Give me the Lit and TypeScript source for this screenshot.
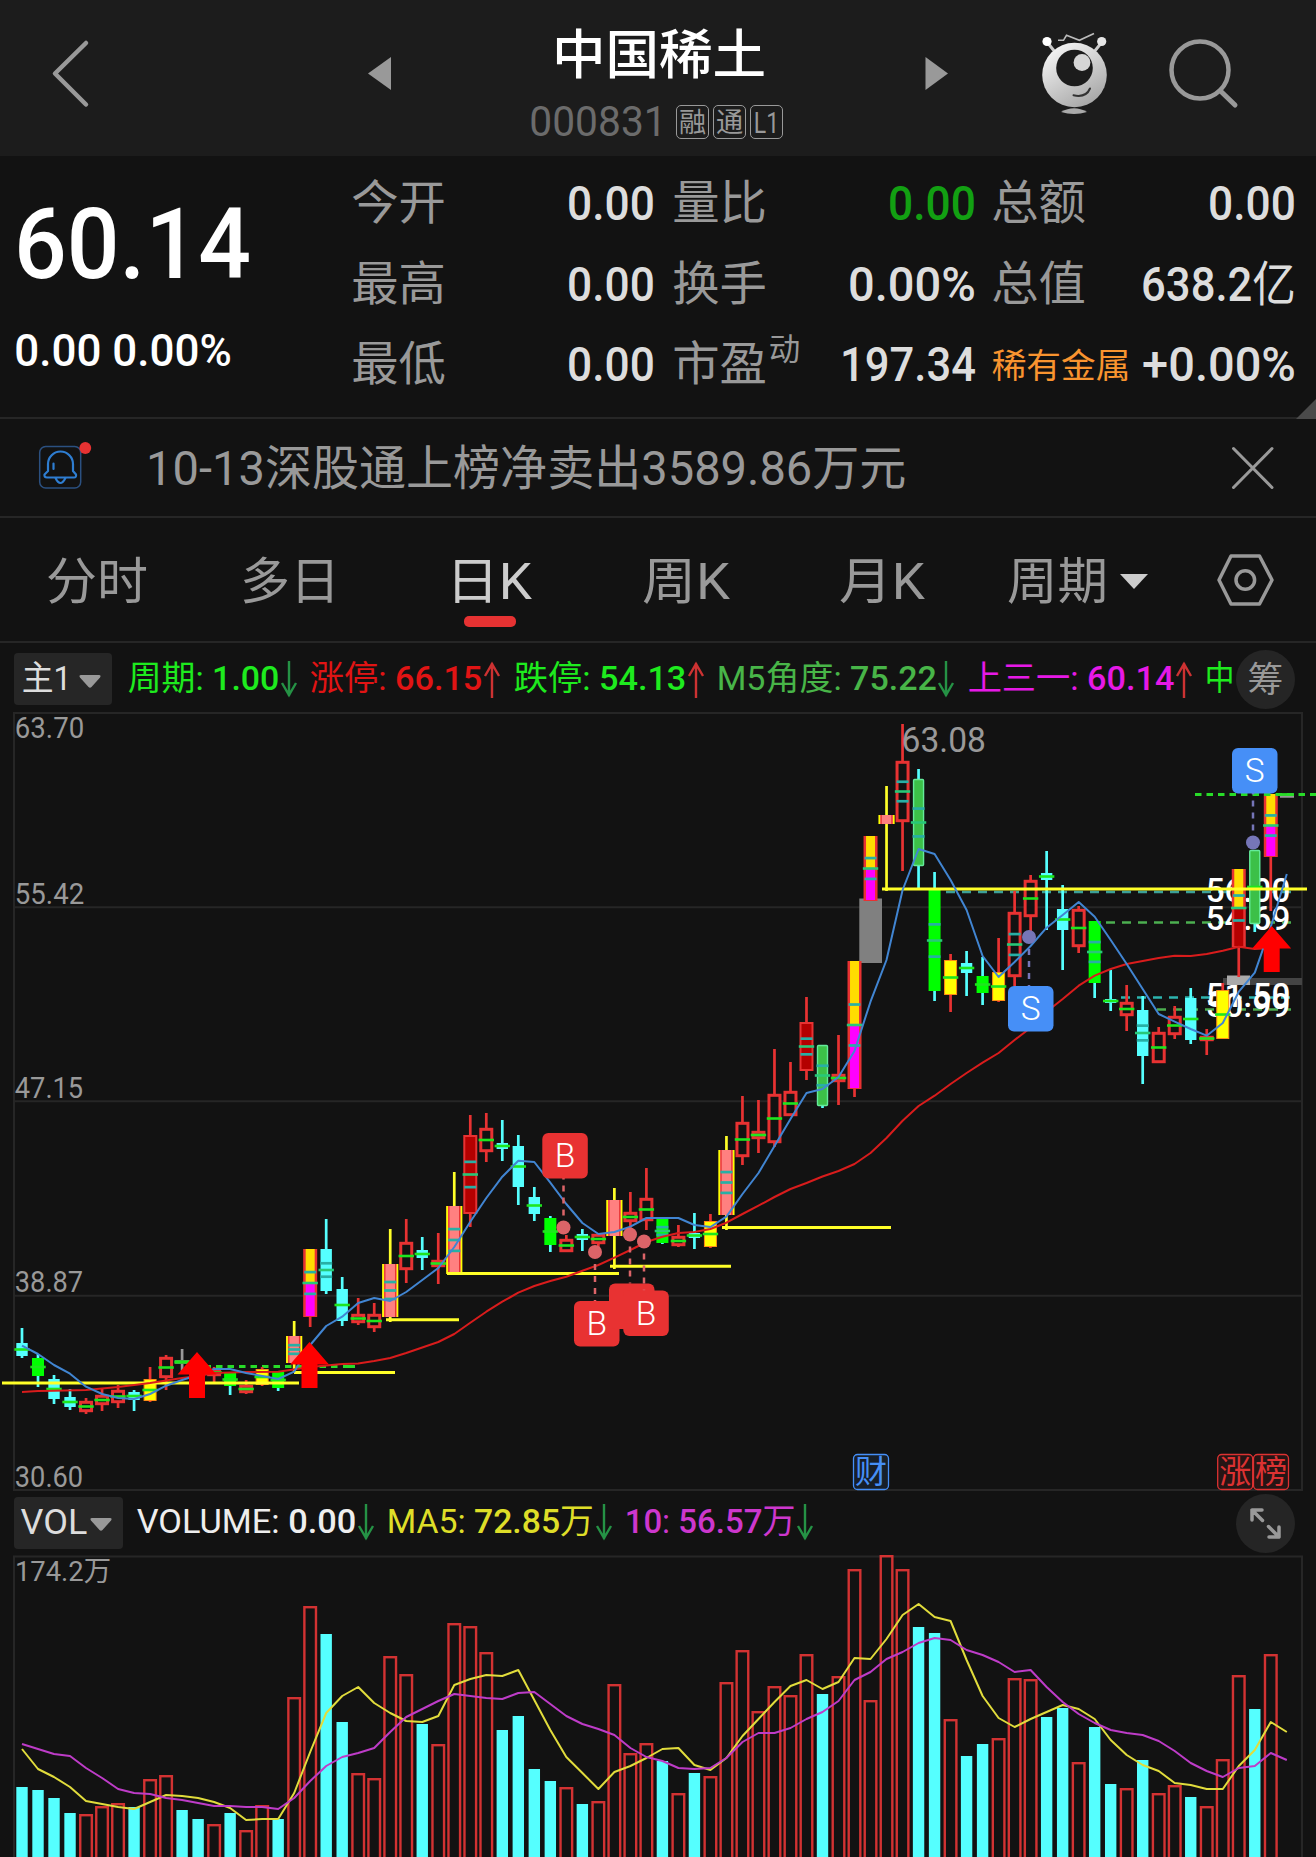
import { LitElement, html, svg, css } from 'lit';
import { customElement, property } from 'lit/decorators.js';

/** Figures carry the heavier weight; words and units stay regular. */
const runs = (text: string) => text.split(/([0-9.%+ ]{2,})/).filter(Boolean)
  .map(part => svg`<tspan class=${/^[0-9.%+ ]+$/.test(part) ? 'fig' : 'word'}>${part}</tspan>`);

/** One line of text fitted to an exact ink width. */
const fit = (text: string, width: number, size: number, cls = '') => html`
  <svg class="fit ${cls}" width=${width} height=${size} font-size=${size}>
    <text x=${-0.04 * size} y=${0.86 * size} textLength=${width + 0.08 * size} lengthAdjust="spacingAndGlyphs">${cls.includes('mix') ? runs(text) : text}</text>
  </svg>`;

/** Same, but placed inside a chart by its ink box. */
const label = (text: string, left: number, right: number, base: number, size: number, cls: string) => svg`
  <text class=${cls} x=${left - 0.04 * size} y=${base} font-size=${size}
    textLength=${right - left + 0.08 * size} lengthAdjust="spacingAndGlyphs">${text}</text>`;

const FONT = css`
  :host { display: block; font-family: Roboto, "Noto Sans CJK SC", sans-serif; }
  svg { display: block; flex: none; overflow: visible; }
  .fit { fill: currentColor; }
  .m, .fig { font-weight: 500; }
  .word { font-weight: 400; }
`;

const STEP = 16.01;
const cx = (i: number) => 22 + STEP * i;
const path = (ys: [number, number][]) => ys.map(([i, y]) => `${cx(i).toFixed(1)},${y}`).join(' ');

/* kind, high, body top, body bottom, low, banded */
type Candle = [string, number, number, number, number, number?];
const CANDLES: Candle[] = [
  ['c', 1328, 1343, 1356, 1358], ['g', 1354, 1358, 1376, 1387], ['c', 1375, 1379, 1399, 1404],
  ['c', 1389, 1397, 1407, 1410], ['r', 1398, 1401, 1412, 1414], ['r', 1389, 1395, 1405, 1411],
  ['r', 1385, 1390, 1403, 1408], ['c', 1390, 1392, 1400, 1411], ['y', 1367, 1379, 1401, 1402],
  ['r', 1355, 1357, 1378, 1390], ['x', 1349, 1360, 1364, 1373], ['r', 1360, 1364, 1372, 1380],
  ['r', 1367, 1369, 1376, 1382], ['g', 1372, 1373, 1386, 1395], ['r', 1380, 1385, 1393, 1394],
  ['y', 1367, 1369, 1385, 1386], ['g', 1371, 1372, 1388, 1391], ['p', 1321, 1336, 1363, 1373, 1],
  ['m', 1249, 1249, 1317, 1327, 1], ['c', 1219, 1249, 1291, 1294, 1], ['c', 1277, 1289, 1321, 1326],
  ['r', 1298, 1314, 1323, 1325], ['r', 1303, 1314, 1328, 1332], ['p', 1229, 1264, 1317, 1322, 1],
  ['r', 1219, 1242, 1270, 1283], ['c', 1237, 1250, 1258, 1270], ['r', 1233, 1260, 1267, 1284],
  ['p', 1172, 1206, 1274, 1275, 1], ['d', 1115, 1135, 1214, 1227, 1], ['r', 1113, 1128, 1152, 1162],
  ['c', 1120, 1143, 1149, 1161], ['c', 1135, 1146, 1187, 1205], ['c', 1187, 1197, 1214, 1221],
  ['g', 1216, 1218, 1245, 1252], ['r', 1235, 1239, 1252, 1252], ['c', 1229, 1234, 1240, 1251],
  ['r', 1233, 1234, 1244, 1247], ['p', 1188, 1200, 1236, 1269], ['r', 1192, 1212, 1222, 1228],
  ['r', 1168, 1198, 1221, 1230], ['g', 1218, 1219, 1243, 1244, 1], ['r', 1225, 1236, 1246, 1247],
  ['c', 1213, 1233, 1238, 1249], ['y', 1214, 1221, 1247, 1248], ['p', 1136, 1150, 1215, 1230, 1],
  ['r', 1096, 1122, 1157, 1165], ['r', 1100, 1131, 1139, 1153], ['r', 1049, 1094, 1143, 1147],
  ['r', 1062, 1091, 1116, 1116], ['d', 997, 1022, 1071, 1080, 1], ['G', 1045, 1045, 1106, 1108, 1],
  ['r', 1035, 1074, 1082, 1105], ['m', 961, 961, 1089, 1097, 1], ['m', 836, 836, 901, 901, 1],
  ['p', 786, 815, 824, 891], ['r', 724, 761, 822, 871, 1], ['G', 769, 779, 866, 888, 1],
  ['g', 872, 890, 991, 1001, 1], ['y', 954, 960, 995, 1012], ['c', 951, 963, 973, 996],
  ['g', 957, 976, 993, 1005], ['y', 938, 972, 1001, 1002], ['r', 891, 912, 977, 986, 1],
  ['r', 875, 880, 917, 932], ['c', 851, 873, 880, 930], ['c', 885, 909, 930, 970],
  ['r', 906, 909, 947, 953], ['g', 921, 921, 983, 998, 1], ['c', 970, 999, 1003, 1011],
  ['r', 985, 1002, 1016, 1031], ['c', 996, 1010, 1056, 1084, 1], ['r', 1027, 1032, 1063, 1063],
  ['r', 1006, 1016, 1035, 1039], ['c', 988, 998, 1040, 1044], ['r', 1029, 1036, 1041, 1055],
  ['y', 983, 990, 1039, 1039], ['k', 869, 869, 947, 977, 1], ['G', 850, 850, 924, 932],
  ['m', 794, 794, 857, 911, 1],
];

const MA5 = [1345.7, 1354, 1365, 1373.7, 1386.7, 1394, 1398, 1399, 1394, 1385.7, 1380, 1375, 1369, 1369, 1373, 1376,
  1379, 1371.7, 1345, 1326, 1316.7, 1303, 1298, 1301, 1292, 1280, 1268, 1247, 1221.7, 1198, 1176.7, 1160.7, 1162,
  1182.7, 1204, 1223, 1234, 1232, 1226.7, 1218, 1218, 1218, 1225, 1227, 1216.7, 1194, 1173, 1146, 1119, 1093, 1089,
  1077, 1051, 1001.7, 960, 890, 849, 854, 880, 910, 956, 977, 962, 946, 927.7, 915, 902, 916.7, 940, 964, 989, 1014,
  1021.7, 1029, 1035.7, 1023, 991.7, 972.7, 926.7, 874];
const TREND: [number, number][] = [[0, 1392], [1, 1391], [2, 1390.7], [4, 1390], [6, 1387], [8, 1383], [10, 1378],
  [11, 1376], [12, 1373], [14, 1372], [16, 1371.7], [18, 1367], [20, 1364], [21, 1363.5], [22, 1361], [23, 1358],
  [24, 1353], [26, 1342], [27, 1334], [28, 1322.7], [29, 1311.7], [30, 1301.7], [31, 1292.7], [32, 1286], [33, 1281],
  [34, 1276.7], [35, 1270.7], [36, 1265], [37, 1257.7], [38, 1250], [39, 1242], [40, 1236.7], [41, 1233], [42, 1232],
  [43, 1229], [44, 1222.7], [45, 1214], [46, 1205.7], [47, 1197], [48, 1189], [49, 1183], [50, 1176.5], [51, 1171],
  [52, 1164], [53, 1153], [54, 1138], [55, 1120.7], [56, 1106], [57, 1095.7], [58, 1084], [59, 1073], [60, 1062.7],
  [61, 1053], [62, 1040], [63, 1027.7], [64, 1011.7], [65, 999], [66, 985.7], [67, 975.7], [68, 969], [69, 964],
  [70, 961], [71, 958], [72, 955.7], [73, 956], [74, 954], [75, 950.7], [76, 946.7], [77, 949], [78, 948]];

@customElement('k-chart')
class KChart extends LitElement {
  static styles = [FONT, css`
    .grid { fill: none; stroke: #262626; stroke-width: 2; }
    .axis { fill: #999; }
    .tag { fill: #fff; font-weight: 500; }
    .mark { fill: #fff; font-weight: 300; text-anchor: middle; }
    .yl { stroke: #ffff28; stroke-width: 3; }
    .dash { stroke-width: 2.6; stroke-dasharray: 9 7; }
    .ma { fill: none; stroke-width: 2; stroke-linejoin: round; }
  `];

  private candle([k, hi, top, bot, lo, band]: Candle, i: number) {
    const x = cx(i);
    const h = bot - top;
    const mid = (top + bot) / 2;
    const red = '#e83232';
    const cyan = '#55ffff';
    const wick: Record<string, string> = { c: cyan, g: cyan, G: cyan, p: '#ffff28', x: '#999' };
    const body = () => {
      switch (k) {
        case 'c': return svg`<rect x=${x - 5.7} y=${top} width="11.4" height=${h} fill=${cyan} />`;
        case 'g': return svg`<rect x=${x - 6} y=${top} width="12" height=${h} fill="#0f0" />`;
        case 'G': return svg`<rect x=${x - 5} y=${top + 0.5} width="10" height=${h - 1} rx="1" fill="#3cc048" stroke="#64eb9b" stroke-width="1.4" />`;
        case 'y': return svg`<rect x=${x - 6} y=${top + 0.5} width="12" height=${h - 1} fill="#ff0" stroke="#ff8c14" stroke-width="1" />`;
        case 'p': return svg`<rect x=${x - 7.5} y=${top} width="15" height=${h} fill="#ff8080" />
          <path d="M${x - 7.2} ${top}V${bot}M${x + 7.2} ${top}V${bot}" stroke="#ff0" stroke-width="1.8" />
          <path d="M${x - 5.4} ${top}V${bot}M${x + 5.4} ${top}V${bot}" stroke=${red} stroke-width="1.3" />`;
        case 'd': return svg`<rect x=${x - 6} y=${top + 1} width="12" height=${h - 2} fill="#b40000" stroke=${red} stroke-width="2" />`;
        case 'm': case 'k': return svg`<rect x=${x - 7} y=${top} width="14" height=${h} fill=${red} />
          <rect x=${x - 4.5} y=${top} width="9" height=${h / 2} fill="#ffdc00" />
          <rect x=${x - 4.5} y=${mid} width="9" height=${h / 2 - 1} fill=${k === 'm' ? '#f0f' : '#b40000'} />`;
        case 'x': return svg`<rect x=${x - 7.5} y=${mid - 2} width="15" height="4" fill="#4a4" />`;
        default: return svg`<rect x=${x - 5.5} y=${top + 1.3} width="11" height=${Math.max(h - 2.6, 1)} fill="#121212" stroke=${red} stroke-width="3" />`;
      }
    };
    return svg`<g>
      <path d="M${x} ${hi}V${k === 'p' ? lo : top}M${x} ${bot}V${lo}" stroke=${wick[k] ?? red} stroke-width="2.7" />
      ${body()}
      ${band ? [-1, 1].map(s => svg`<path d="M${x - 6} ${mid + s * h * 0.16}h12" stroke="#28afa5" stroke-width="2.7" />`) : ''}
      ${k === 'p' ? (band ? svg`<path d="M${x - 6} ${mid}h12" stroke="#28afa5" stroke-width="2.7" />` : '')
        : svg`<path d="M${x - 7.7} ${mid}h15.4" stroke=${band ? '#28c878' : '#1ee61e'} stroke-width="2.6" />`}
    </g>`;
  }

  private arrow(x: number, y: number) {
    return svg`<path d="M${x} ${y}l19.5 22.5h-11.5v23.5h-16v-23.5h-11.5z" fill="#f00" />`;
  }

  private pin(letter: string, x: number, y: number, dotX: number, dotY: number) {
    const buy = letter !== 'S';
    const up = dotY < y;
    const tint = buy ? '#dc6468' : '#7676b8';
    return svg`
      <path d="M${dotX} ${dotY}V${up ? y : y + 45}" stroke=${tint} stroke-width="2.5" stroke-dasharray="6 6" />
      <circle cx=${dotX} cy=${dotY} r="7" fill=${tint} />
      <rect x=${x} y=${y} width="45.5" height="45.5" rx="6" fill=${buy ? '#e83232' : '#468ff7'} />
      <text class="mark" x=${x + 22.7} y=${y + 34} font-size="33.5">${letter.trim()}</text>`;
  }

  private flag(text: string, x: number, color: string) {
    return svg`<rect x=${x} y="1454.5" width="35" height="35" rx="4" fill=${color} fill-opacity="0.1" stroke=${color} stroke-width="1.3" />
      <text x=${x + 17.5} y="1483" font-size="32" text-anchor="middle" fill=${color}>${text}</text>`;
  }

  render() {
    const lines = [[2, 299, 1383], [294, 395, 1372.5], [386, 459, 1319.7], [447, 619, 1273.5], [610, 731, 1266.3],
      [722, 891, 1227.5], [882, 1307, 889]];
    return html`<svg width="1316" height="780" viewBox="0 712 1316 780">
      <path class="grid" d="M14 713H1302V1490H14ZM14 907.3H1302M14 1101.3H1302M14 1295.7H1302" />
      ${label('63.70', 16, 83, 738, 29.5, 'axis')}
      ${label('55.42', 16, 83, 904, 29.5, 'axis')}
      ${label('47.15', 16, 82, 1098, 29.5, 'axis')}
      ${label('38.87', 16, 82, 1292, 29.5, 'axis')}
      ${label('30.60', 16, 82, 1487, 29.5, 'axis')}
      <rect x="859.3" y="898.5" width="22.7" height="64.5" fill="#808080" />
      <path class="dash" d="M946 892H1291" stroke="#3ca096" />
      <path class="dash" d="M1106 922.5H1291" stroke="#4caf50" />
      <path class="dash" d="M1121 997.5H1291" stroke="#2db4af" />
      <path class="dash" d="M1157 1009.5H1291" stroke="#4caf50" />
      <path d="M1223 981.5H1302" stroke="#444" stroke-width="7" />
      <path d="M193 1366.5H340" stroke="#28dc28" stroke-width="3" stroke-dasharray="6.5 5" />
      <path d="M343 1366.5H355" stroke="#28dc28" stroke-width="3" />
      ${label('56.00', 1207, 1289, 901.7, 34, 'tag')}
      ${label('54.69', 1207, 1289, 929.5, 34, 'tag')}
      ${label('51.50', 1207, 1289, 1006.5, 34, 'tag')}
      ${label('50.99', 1207, 1289, 1017, 34, 'tag')}
      <rect x="1227" y="975.5" width="23" height="9.5" fill="#aaa" />
      ${CANDLES.map((c, i) => this.candle(c, i))}
      ${label('63.08', 903, 984.5, 752, 35, 'axis')}
      <path d="M1280 796.5H1294" stroke="#999" stroke-width="2.5" />
      <path d="M1195 794.5H1316" stroke="#28dc28" stroke-width="2.8" stroke-dasharray="6.5 5" />
      <path d="M1279 794.5H1294" stroke="#28dc28" stroke-width="2.8" />
      ${lines.map(([a, b, y]) => svg`<path class="yl" d="M${a} ${y}H${b}" />`)}
      <polyline class="ma" stroke="#d91c1c" points=${path(TREND)} />
      <polyline class="ma" stroke="#4185d2" points=${path(MA5.map((y, i) => [i, y]))} />
      ${this.arrow(197, 1352)}${this.arrow(309.5, 1342)}${this.arrow(1271.7, 926)}
      ${this.pin('B', 542.3, 1133, 563.5, 1227.5)}
      ${this.pin('B', 574, 1301, 595, 1252)}
      ${this.pin(' ', 609, 1283.5, 630, 1234.5)}
      ${this.pin('B', 623.3, 1290.5, 644, 1241.5)}
      ${this.pin('S', 1008, 986, 1029, 937)}
      ${this.pin('S', 1232, 748, 1253, 842.5)}
      ${this.flag('财', 853.5, '#468ff7')}${this.flag('涨', 1217.7, '#dc3232')}${this.flag('榜', 1253.5, '#dc3232')}
    </svg>`;
  }
}

const FALLING = new Set([0, 1, 2, 3, 7, 10, 11, 13, 16, 19, 20, 25, 30, 31, 32, 33, 35, 40, 42, 50, 56, 57, 59, 60, 64,
  65, 67, 68, 70, 73, 77]);
const VOLUME = [1787, 1790, 1798, 1813, 1814, 1806, 1803, 1807, 1779, 1775, 1810, 1819, 1824, 1813, 1830, 1805, 1819,
  1697, 1606, 1634, 1722, 1773, 1778, 1656, 1674, 1724, 1744, 1623, 1626, 1652, 1730, 1716, 1769, 1781, 1787, 1804,
  1801, 1684, 1753, 1743, 1761, 1793, 1773, 1776, 1682, 1650, 1711, 1686, 1695, 1654, 1694, 1676, 1569, 1700, 1555,
  1569, 1627, 1633, 1719, 1756, 1744, 1738, 1678, 1679, 1717, 1708, 1762, 1727, 1784, 1788, 1760, 1793, 1785, 1797,
  1806, 1759, 1675, 1709, 1654];
const V5 = [1749, 1769, 1777, 1787, 1801, 1804, 1807, 1809, 1802, 1795, 1796, 1798, 1802, 1808, 1820, 1819, 1819, 1793,
  1752, 1713, 1696, 1687, 1703, 1713, 1721, 1722, 1716, 1685, 1679, 1675, 1676, 1670, 1700, 1730, 1757, 1773, 1789,
  1772, 1766, 1758, 1749, 1748, 1765, 1770, 1758, 1736, 1719, 1702, 1686, 1680, 1689, 1682, 1658, 1659, 1639, 1615,
  1604, 1617, 1621, 1660, 1696, 1718, 1727, 1719, 1712, 1705, 1709, 1719, 1740, 1755, 1765, 1771, 1783, 1785, 1789,
  1789, 1766, 1750, 1722, 1732];
const V10 = [1744, 1749, 1754, 1756, 1768, 1778, 1789, 1793, 1794, 1798, 1800, 1803, 1806, 1806, 1807, 1807, 1809,
  1798, 1781, 1766, 1757, 1753, 1748, 1732, 1717, 1709, 1701, 1694, 1696, 1698, 1699, 1693, 1692, 1704, 1716, 1724,
  1729, 1735, 1748, 1757, 1761, 1768, 1769, 1768, 1758, 1742, 1733, 1733, 1728, 1719, 1712, 1701, 1680, 1672, 1659,
  1652, 1643, 1638, 1640, 1650, 1655, 1662, 1672, 1670, 1687, 1702, 1714, 1723, 1730, 1733, 1735, 1741, 1751, 1763,
  1771, 1777, 1768, 1766, 1753, 1760];

@customElement('volume-chart')
class VolumeChart extends LitElement {
  static styles = [FONT, css`
    svg { overflow: hidden; }
    .grid { fill: none; stroke: #262626; stroke-width: 2; }
    .axis { fill: #999; }
    .ma { fill: none; stroke-width: 2; stroke-linejoin: round; }
  `];

  render() {
    return html`<svg width="1316" height="303" viewBox="0 1554 1316 303">
      <path class="grid" d="M14 1860V1556.5H1302V1860" />
      ${label('174.2万', 16, 110, 1580.5, 28, 'axis')}
      ${VOLUME.map((y, i) => FALLING.has(i)
        ? svg`<rect x=${cx(i) - 5.7} y=${y} width="11.4" height=${1860 - y} fill="#55ffff" />`
        : svg`<rect x=${cx(i) - 5.8} y=${y + 1.2} width="11.6" height=${1860 - y} fill="none" stroke="#d23232" stroke-width="2.4" />`)}
      <polyline class="ma" stroke="#e1dc3c" points=${path(V5.map((y, i) => [i, y]))} />
      <polyline class="ma" stroke="#be3cc8" points=${path(V10.map((y, i) => [i, y]))} />
    </svg>`;
  }
}

@customElement('trend-arrow')
class TrendArrow extends LitElement {
  @property({ type: Boolean }) up = false;
  static styles = [FONT, css`
    path { fill: none; stroke-width: 2.4; }
    .up { stroke: #cd3232; }
    .down { stroke: #259245; }
  `];
  render() {
    return html`<svg width="16" height="37">
      ${this.up ? svg`<path class="up" d="M8 37V2M1 15L8 3L15 15" />` : svg`<path class="down" d="M8 0V35M1 22L8 34L15 22" />`}
    </svg>`;
  }
}

@customElement('app-root')
class AppRoot extends LitElement {
  static styles = [FONT, css`
    :host { background: #121212; width: 1316px; height: 1857px; overflow: hidden; color: #999; }
    header { display: flex; height: 156px; padding-left: 50px; background: #1c1c1c; box-sizing: border-box; }
    .prev { margin-left: 274px; }
    .robot { margin-left: 86px; }
    .search { margin-left: 54px; }
    .icon { fill: none; stroke: #999; stroke-linecap: round; stroke-linejoin: round; }
    .solid { fill: #999; }
    .title { width: 531px; display: flex; flex-direction: column; align-items: center; padding-top: 28px; color: #fff; box-sizing: border-box; }
    .code { display: flex; gap: 4px; margin-top: 19px; color: #6b6b6b; margin-left: -4px; }
    .badge { width: 33px; height: 34px; margin-top: 5px; border: 1.5px solid #999; border-radius: 5px; box-sizing: border-box;
      display: flex; align-items: center; justify-content: center; color: #999; }
    .code .fit.num { margin-right: 7px; }
    .quote { display: flex; position: relative; height: 261px; border-bottom: 2px solid #262626; }
    .price { width: 353px; padding: 37px 0 0 18px; box-sizing: border-box; color: #fff; }
    .price .chg { margin: 36.5px 0 0 -2px; }
    .stats { display: grid; grid-template-columns: 300px 302px 300.5px; column-gap: 19px; grid-auto-rows: 80.5px; padding-top: 23px; }
    .stat { display: flex; align-items: flex-start; box-sizing: border-box; }
    .stat:nth-child(3n+2) { padding-left: 2px; }
    .stat .val { margin-left: auto; color: #ddd; }
    .stat .green { color: #12a012; }
    .stat .sup { margin: -7px 0 0 5px; }
    .stat .sector { color: #f9942f; margin-top: 9px; }
    .corner { position: absolute; right: 0; bottom: -2px; }
    .notice { display: flex; height: 99px; align-items: center; padding: 0 42px 0 39px; border-bottom: 2px solid #262626; box-sizing: border-box; }
    .bell { margin-top: -3px; }
    .notice .msg { margin-left: 57px; }
    .notice .close { margin-left: auto; }
    .tabs { display: grid; grid-template-columns: 193px 194px 213px 171px 222px 171px 152px; height: 125px; border-bottom: 2px solid #262626; box-sizing: border-box; }
    .tab { position: relative; display: flex; align-items: center; justify-content: center; gap: 14px; padding-top: 3px; }
    .on { color: #ccc; }
    .on .fit { margin-left: -9px; }
    .gear { margin: -3px 0 0 10px; }
    .bar { position: absolute; left: 50%; bottom: 14px; width: 52px; height: 11px; margin-left: -30px; border-radius: 5px; background: #e63232; }
    .legend { display: flex; height: 69px; padding: 10px 21px 0 14px; box-sizing: border-box; }
    .vol { height: 62px; padding-top: 5px; }
    .pick { display: flex; width: 98px; height: 52px; border-radius: 4px; background: #262626; color: #ddd; box-sizing: border-box; padding: 8px 0 0 9px; margin-right: 17px; }
    .vol .pick { width: 109px; margin-right: 15px; padding: 7px 0 0 8px; }
    .pick svg + svg { margin-left: 9px; }
    .vol .pick svg + svg { margin-left: 4px; }
    .item { display: flex; gap: 3px; margin: 8px 14.3px 0 0; }
    .vol .item { margin-top: 7px; }
    .round { width: 59px; height: 59px; border-radius: 50%; background: #252525; margin: -3px 0 0 auto; display: flex; align-items: center; justify-content: center; flex: none; }
    .lime { color: #1eeb1e; } .red { color: #e11414; } .leaf { color: #48b548; } .pink { color: #e619e6; }
    .white { color: #eee; } .yel { color: #dede28; } .vio { color: #cd37cd; }
    .legend .last { margin-right: 0; }
  `];

  private stat(name: string, value: string, w: number, cls = '') {
    return html`<div class="stat">${fit(name, 91, 47)}${fit(value, w, 48, `mix val ${cls}`)}</div>`;
  }

  private item(text: string, w: number, color: string, up: boolean) {
    return html`<div class="item ${color}">${fit(text, w, 34, 'mix')}<trend-arrow ?up=${up}></trend-arrow></div>`;
  }

  render() {
    return html`
      <header>
        <svg width="42" height="156" viewBox="50 0 42 156"><path class="icon" stroke-width="4.5" d="M86 43L55 73.5L86 104.5" /></svg>
        <svg class="prev" width="27" height="156" viewBox="366 0 27 156"><path class="solid" d="M368 73.5L391 57V90Z" /></svg>
        <div class="title">
          ${fit('中国稀土', 210, 53, 'm')}
          <div class="code">
            ${fit('000831', 134, 42, 'num')}
            <span class="badge">${fit('融', 25, 27)}</span><span class="badge">${fit('通', 25, 27)}</span><span class="badge">${fit('L1', 23, 30)}</span>
          </div>
        </div>
        <svg width="26" height="156" viewBox="924 0 26 156"><path class="solid" d="M948 73.5L925.5 57V90Z" /></svg>
        <svg class="robot" width="76" height="156" viewBox="1036 0 76 156">
          <defs><linearGradient id="g" x1="0" y1="0" x2="0.6" y2="1"><stop offset="0" stop-color="#fff" /><stop offset="1" stop-color="#aaa" /></linearGradient></defs>
          <path d="M1047 42L1055 52M1102 42L1094 52" stroke="#ccc" stroke-width="3" />
          <circle cx="1047" cy="41.5" r="4.6" fill="#fff" /><circle cx="1101.7" cy="41.5" r="4.6" fill="#e6e6e6" />
          <path d="M1058 40.3H1063.5L1066.5 35.3L1079.4 40.3L1094 33.5" fill="none" stroke="#bbb" stroke-width="1.6" />
          <circle cx="1074.5" cy="75" r="32.3" fill="url(#g)" />
          <circle cx="1074.5" cy="68" r="18.3" fill="#1c1c1c" /><circle cx="1082" cy="62.5" r="8.4" fill="#d6d6d6" />
          <path d="M1073.5 95.3Q1086 98 1090 88.5" fill="none" stroke="#333" stroke-width="2" stroke-linecap="round" />
          <path d="M1061 112Q1074 104.500 1087 112Q1074 116 1061 112Z" fill="#aaa" />
        </svg>
        <svg class="search" width="76" height="156" viewBox="1166 0 76 156">
          <circle class="icon" cx="1200" cy="70" r="28.5" stroke-width="4.5" /><path class="icon" stroke-width="5" d="M1221 91.5L1235 105" />
        </svg>
      </header>

      <section class="quote">
        <div class="price">${fit('60.14', 229, 98.5, 'm')}${fit('0.00 0.00%', 214, 44, 'm chg')}</div>
        <div class="stats">
          ${this.stat('今开', '0.00', 84)}${this.stat('量比', '0.00', 84, 'green')}${this.stat('总额', '0.00', 84)}
          ${this.stat('最高', '0.00', 84)}${this.stat('换手', '0.00%', 124)}${this.stat('总值', '638.2亿', 151)}
          ${this.stat('最低', '0.00', 84)}
          <div class="stat">${fit('市盈', 91, 47)}${fit('动', 29, 31, 'sup')}${fit('197.34', 132, 48, 'm val')}</div>
          <div class="stat">${fit('稀有金属', 136, 34, 'sector')}${fit('+0.00%', 150, 48, 'm val')}</div>
        </div>
        <svg class="corner" width="20" height="20"><path d="M20 0V20H0Z" fill="#4a4a4a" /></svg>
      </section>

      <section class="notice">
        <svg class="bell" width="52" height="48" viewBox="39 442 52 48">
          <rect x="39.700" y="446.500" width="41" height="41.500" rx="6" fill="none" stroke="#2b5080" stroke-width="1.5" />
          <path d="M47 477.500Q44 477.500 44.500 474.500L48 471V464A12.300 12.300 0 0 1 73 464V471L76 474.500Q76.500 477.500 74 477.500ZM55.500 478Q60.300 488 65.500 478M53.500 463.500V469" fill="none" stroke="#2e7dd1" stroke-width="2.2" stroke-linecap="round" stroke-linejoin="round" />
          <circle cx="85.300" cy="448" r="5.900" fill="#e63232" />
        </svg>
        ${fit('10-13深股通上榜净卖出3589.86万元', 756.5, 47.5, 'msg')}
        <svg class="close" width="42" height="42"><path class="icon" stroke-width="3" d="M1.500 1.500L40 40.500M40 1.500L1.500 40.500" /></svg>
      </section>

      <nav class="tabs">
        <div class="tab">${fit('分时', 98, 50)}</div>
        <div class="tab">${fit('多日', 96, 50)}</div>
        <div class="tab on">${fit('日K', 82, 50)}<i class="bar"></i></div>
        <div class="tab">${fit('周K', 84, 50)}</div>
        <div class="tab">${fit('月K', 82, 50)}</div>
        <div class="tab">${fit('周期', 97, 50)}<svg width="28" height="15"><path d="M0 0H28L14 15Z" fill="#ccc" /></svg></div>
        <div class="tab"><svg class="gear" width="57" height="52" viewBox="1217.500 553.500 57 52">
          <path class="icon" stroke-width="3.500" d="M1231.500 555.500H1260L1272.500 579.500L1260 603.500H1231.500L1219.500 579.500Z" />
          <circle class="icon" cx="1245.800" cy="579.500" r="9.300" stroke-width="3.500" />
        </svg></div>
      </nav>

      <div class="legend">
        <div class="pick">${fit('主1', 47, 34)}<svg width="22" height="34" viewBox="0 -14 22 34"><path class="solid" d="M2 0H20Q22.500 0 21 2.500L12.500 12Q11 13.500 9.500 12L1 2.500Q-0.500 0 2 0Z" /></svg></div>
        ${this.item('周期: 1.00', 149, 'lime', false)}${this.item('涨停: 66.15', 170, 'red', true)}
        ${this.item('跌停: 54.13', 170, 'lime', true)}${this.item('M5角度: 75.22', 217.5, 'leaf', false)}
        ${this.item('上三一: 60.14', 204, 'pink', true)}
        <div class="item lime last">${fit('中', 27, 34)}</div>
        <div class="round">${fit('筹', 33, 35)}</div>
      </div>

      <k-chart></k-chart>

      <div class="legend vol">
        <div class="pick">${fit('VOL', 64, 35)}<svg width="22" height="34" viewBox="0 -14 22 34"><path class="solid" d="M2 0H20Q22.500 0 21 2.500L12.500 12Q11 13.500 9.500 12L1 2.500Q-0.500 0 2 0Z" /></svg></div>
        ${this.item('VOLUME: 0.00', 217, 'white', false)}${this.item('MA5: 72.85万', 204.5, 'yel', false)}${this.item('10: 56.57万', 168, 'vio', false)}
        <div class="round"><svg width="31" height="31"><path class="icon" stroke-width="3.500" d="M2 12V2H12M2 2L12.500 12.500M29 19V29H19M29 29L18.500 18.500" /></svg></div>
      </div>

      <volume-chart></volume-chart>`;
  }
}
